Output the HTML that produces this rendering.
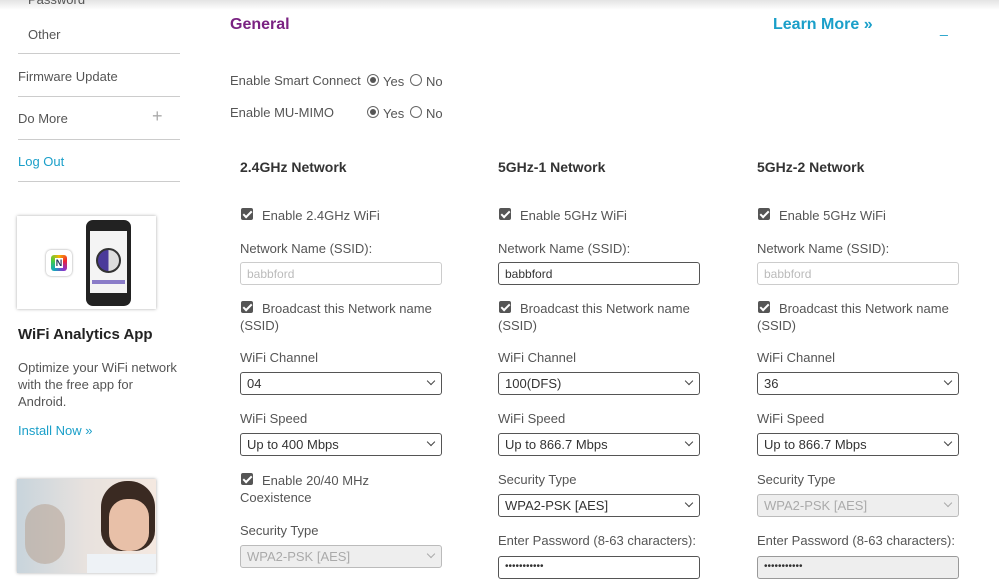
<!DOCTYPE html>
<html><head><meta charset="utf-8"><style>
*{margin:0;padding:0;box-sizing:border-box}
body{width:999px;height:573px;overflow:hidden;background:#fff;font-family:"Liberation Sans",Arial,sans-serif;color:#555;font-size:13px;position:relative}
.a{position:absolute;white-space:nowrap}
.top{position:absolute;left:0;top:0;width:999px;height:10px;background:linear-gradient(#e4e4e4,#fff)}
.hr{position:absolute;left:18px;width:162px;height:1px;background:#ccc}
.nav{position:absolute;left:18px;font-size:13px;color:#555}
.h{font-weight:bold;font-size:14px;color:#333}
.cb{position:absolute;width:12px;height:12px;background:#555;border-radius:2px}
.cb:after{content:"";position:absolute;left:4px;top:1px;width:3px;height:7px;border:solid #fff;border-width:0 2px 2px 0;transform:rotate(45deg)}
.sel{position:absolute;width:202px;height:23px;border:1px solid #555;border-radius:3px;background:#fff;font-size:13px;color:#333;padding:3px 0 0 6px}
.sel:after{content:"";position:absolute;right:7px;top:5px;width:5px;height:5px;border:solid #444;border-width:0 1.5px 1.5px 0;transform:rotate(45deg)}
.dis{background:#eee;border-color:#bbb;color:#aaa}
.dis:after{border-color:#aaa}
.inp{position:absolute;width:202px;height:23px;border:1px solid #555;border-radius:3px;background:#fff;font-size:12px;color:#333;padding:4px 0 0 6px}
.idis{border-color:#ccc;color:#bbb;background:#fff}
.rad{position:absolute;width:12px;height:12px;border:1px solid #666;border-radius:50%;background:#fff}
.rad.on:after{content:"";position:absolute;left:2px;top:2px;width:6px;height:6px;border-radius:50%;background:#555}
</style></head><body>
<div class="top"></div>
<div class="nav" style="left:28px;top:-8px">Password</div>
<div class="nav" style="left:28px;top:27px">Other</div>
<div class="hr" style="top:53px"></div>
<div class="nav" style="top:69px">Firmware Update</div>
<div class="hr" style="top:96px"></div>
<div class="nav" style="top:111px">Do More</div>
<div class="a" style="left:152px;top:106px;font-size:18px;color:#aaa;font-weight:300">+</div>
<div class="hr" style="top:139px"></div>
<div class="nav" style="top:154px;color:#1a9fc9">Log Out</div>
<div class="hr" style="top:181px"></div>
<div class="a" style="left:17px;top:216px;width:139px;height:93px;background:#fff;box-shadow:0 0 3px #aaa">
 <div class="a" style="left:29px;top:34px;width:26px;height:26px;border-radius:5px;background:#fff;box-shadow:0 0 2px #999"><div style="margin:5px;width:16px;height:16px;background:conic-gradient(#f7b500,#e23,#83c,#1ab,#4c4,#f7b500);border-radius:3px;font:bold 9px sans-serif;color:#22335a;text-align:center;line-height:16px"><span style="background:#fff;padding:0 1px">N</span></div></div>
 <div class="a" style="left:69px;top:4px;width:45px;height:86px;background:#222;border-radius:7px">
  <div class="a" style="left:4px;top:11px;width:37px;height:62px;background:#f4f4f4"></div>
  <div class="a" style="left:10px;top:28px;width:25px;height:25px;border-radius:50%;background:conic-gradient(#ddd 0 50%,#4a3a9a 50%);border:2px solid #333"></div>
  <div class="a" style="left:6px;top:60px;width:33px;height:4px;background:#8a7cc8"></div>
 </div>
</div>
<div class="a" style="left:18px;top:326px;font-size:15px;font-weight:bold;color:#222">WiFi Analytics App</div>
<div class="a" style="left:18px;top:359px;line-height:17px;white-space:normal;width:160px;font-size:13px">Optimize your WiFi network with the free app for Android.</div>
<div class="a" style="left:18px;top:423px;color:#1a9fc9">Install Now »</div>
<div class="a" style="left:17px;top:479px;width:139px;height:94px;background:linear-gradient(90deg,#c8d4dc,#e8e2de 50%,#f4e8e0);box-shadow:0 0 3px #aaa;overflow:hidden">
 <div class="a" style="left:8px;top:25px;width:40px;height:60px;border-radius:20px;background:#b9a79a;opacity:.6"></div>
 <div class="a" style="left:84px;top:2px;width:54px;height:70px;border-radius:26px 26px 20px 20px;background:#3a2a22"></div>
 <div class="a" style="left:92px;top:20px;width:40px;height:52px;border-radius:18px;background:#e8c0a8"></div>
 <div class="a" style="left:70px;top:75px;width:70px;height:30px;background:#eef2f6"></div>
</div>

<div class="a" style="left:230px;top:16px;font-size:16px;font-weight:bold;color:#7a2282">General</div>
<div class="a" style="left:773px;top:16px;font-size:16px;font-weight:bold;color:#1a9fc9">Learn More »</div>
<div class="a" style="left:940px;top:20px;font-size:14px;color:#1a9fc9">_</div>
<div class="a" style="left:230px;top:73px">Enable Smart Connect</div>
<div class="rad on" style="left:367px;top:74px"></div><div class="a" style="left:383px;top:74px">Yes</div>
<div class="rad" style="left:410px;top:74px"></div><div class="a" style="left:426px;top:74px">No</div>
<div class="a" style="left:230px;top:105px">Enable MU-MIMO</div>
<div class="rad on" style="left:367px;top:106px"></div><div class="a" style="left:383px;top:106px">Yes</div>
<div class="rad" style="left:410px;top:106px"></div><div class="a" style="left:426px;top:106px">No</div>

<!-- col1 -->
<div class="a h" style="left:240px;top:159px">2.4GHz Network</div>
<div class="cb" style="left:241px;top:208px"></div><div class="a" style="left:262px;top:208px">Enable 2.4GHz WiFi</div>
<div class="a" style="left:240px;top:241px">Network Name (SSID):</div>
<div class="inp idis" style="left:240px;top:262px">babbford</div>
<div class="cb" style="left:241px;top:301px"></div><div class="a" style="left:262px;top:301px">Broadcast this Network name</div>
<div class="a" style="left:240px;top:318px">(SSID)</div>
<div class="a" style="left:240px;top:350px">WiFi Channel</div>
<div class="sel" style="left:240px;top:372px">04</div>
<div class="a" style="left:240px;top:411px">WiFi Speed</div>
<div class="sel" style="left:240px;top:433px">Up to 400 Mbps</div>
<div class="cb" style="left:241px;top:473px"></div><div class="a" style="left:262px;top:473px">Enable 20/40 MHz</div>
<div class="a" style="left:240px;top:490px">Coexistence</div>
<div class="a" style="left:240px;top:523px">Security Type</div>
<div class="sel dis" style="left:240px;top:545px">WPA2-PSK [AES]</div>

<!-- col2 -->
<div class="a h" style="left:498px;top:159px">5GHz-1 Network</div>
<div class="cb" style="left:499px;top:208px"></div><div class="a" style="left:520px;top:208px">Enable 5GHz WiFi</div>
<div class="a" style="left:498px;top:241px">Network Name (SSID):</div>
<div class="inp" style="left:498px;top:262px">babbford</div>
<div class="cb" style="left:499px;top:301px"></div><div class="a" style="left:520px;top:301px">Broadcast this Network name</div>
<div class="a" style="left:498px;top:318px">(SSID)</div>
<div class="a" style="left:498px;top:350px">WiFi Channel</div>
<div class="sel" style="left:498px;top:372px">100(DFS)</div>
<div class="a" style="left:498px;top:411px">WiFi Speed</div>
<div class="sel" style="left:498px;top:433px">Up to 866.7 Mbps</div>
<div class="a" style="left:498px;top:472px">Security Type</div>
<div class="sel" style="left:498px;top:494px">WPA2-PSK [AES]</div>
<div class="a" style="left:498px;top:533px">Enter Password (8-63 characters):</div>
<div class="inp" style="left:498px;top:556px;font-size:10px">•••••••••••</div>

<!-- col3 -->
<div class="a h" style="left:757px;top:159px">5GHz-2 Network</div>
<div class="cb" style="left:758px;top:208px"></div><div class="a" style="left:779px;top:208px">Enable 5GHz WiFi</div>
<div class="a" style="left:757px;top:241px">Network Name (SSID):</div>
<div class="inp idis" style="left:757px;top:262px">babbford</div>
<div class="cb" style="left:758px;top:301px"></div><div class="a" style="left:779px;top:301px">Broadcast this Network name</div>
<div class="a" style="left:757px;top:318px">(SSID)</div>
<div class="a" style="left:757px;top:350px">WiFi Channel</div>
<div class="sel" style="left:757px;top:372px">36</div>
<div class="a" style="left:757px;top:411px">WiFi Speed</div>
<div class="sel" style="left:757px;top:433px">Up to 866.7 Mbps</div>
<div class="a" style="left:757px;top:472px">Security Type</div>
<div class="sel dis" style="left:757px;top:494px">WPA2-PSK [AES]</div>
<div class="a" style="left:757px;top:533px">Enter Password (8-63 characters):</div>
<div class="inp" style="left:757px;top:556px;font-size:10px;background:#eee;border-color:#999">•••••••••••</div>
</body></html>
